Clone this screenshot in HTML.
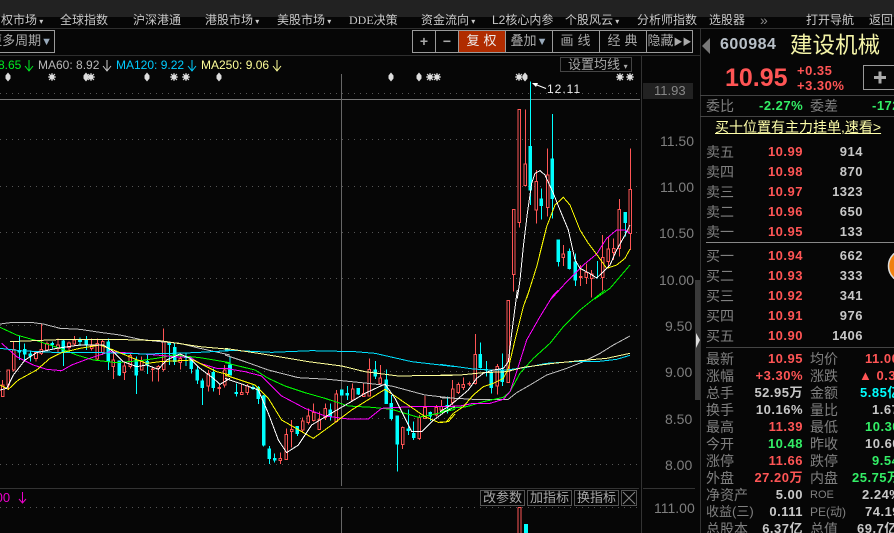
<!DOCTYPE html>
<html><head><meta charset="utf-8">
<style>
html,body{margin:0;padding:0;background:#060606}
#p{position:relative;width:894px;height:533px;overflow:hidden;background:#060606;font-family:"Liberation Sans","WenQuanYi Zen Hei","Noto Sans CJK SC",sans-serif;font-size:12px;color:#bbb}
.t,.a{position:absolute;white-space:nowrap;line-height:16px;height:16px}
.n{font-size:12px;top:12px;color:#c8c8c8}
.b{position:absolute;box-sizing:border-box;border:1px solid #9a9a9a;text-align:center;color:#aaa;font-size:14px;line-height:20px;height:23px;top:30px;white-space:nowrap}
.l{font-size:14px;color:#808080;left:706px}
.m{font-size:14px;color:#808080;left:810px}
.r{font-weight:bold;font-size:13px;letter-spacing:.5px;color:#ff5555;text-align:right;width:80px;left:723px}
.v{font-weight:bold;font-size:13px;letter-spacing:.5px;color:#c8c8c8;text-align:right;width:60px;left:803px}
.w{font-weight:bold;font-size:13px;letter-spacing:.5px;color:#c8c8c8}
.g{color:#33ee66}
.e{color:#ff5555}
.y{font-size:14px;color:#7f7f7f}
.h{position:absolute;background:#2e2e2e;height:1px}
.vl{position:absolute;width:1px;background:#2e2e2e}
.tb{position:absolute;box-sizing:border-box;border:1px solid #555;color:#aaa;font-size:13px;text-align:center;top:490px;height:16px;line-height:14px}
svg{position:absolute;left:0;top:0}
</style></head><body><div id="p">
<div style="position:absolute;left:0;top:0;width:894px;height:17px;background:#222"></div>
<span class="t n" style="left:1px">权市场<span style="font-size:8px"> ▾</span></span>
<span class="t n" style="left:60px">全球指数</span>
<span class="t n" style="left:133px">沪深港通</span>
<span class="t n" style="left:205px">港股市场<span style="font-size:8px"> ▾</span></span>
<span class="t n" style="left:277px">美股市场<span style="font-size:8px"> ▾</span></span>
<span class="t n" style="left:349px;font-family:'Liberation Serif','WenQuanYi Zen Hei',serif">DDE决策</span>
<span class="t n" style="left:421px">资金流向<span style="font-size:8px"> ▾</span></span>
<span class="t n" style="left:492px">L2核心内参</span>
<span class="t n" style="left:565px">个股风云<span style="font-size:8px"> ▾</span></span>
<span class="t n" style="left:637px">分析师指数</span>
<span class="t n" style="left:709px">选股器</span>
<span class="t n" style="left:760px;color:#888;font-size:14px">»</span>
<span class="t n" style="left:806px">打开导航</span>
<span class="t n" style="left:869px">返回</span>
<div class="h" style="left:0;top:28px;width:894px"></div>
<div class="h" style="left:0;top:55px;width:700px"></div>
<div class="b" style="left:-12px;width:67px;font-size:13px;text-align:right;padding-right:2px">更多周期<span style="color:#9ab;font-size:11px">▼</span></div>
<div class="b" style="left:412px;width:24px;font-weight:bold">+</div>
<div class="b" style="left:435px;width:24px;font-weight:bold">−</div>
<div class="b" style="left:458px;width:48px;background:#b02c00;color:#eee;letter-spacing:4px;font-size:13px;padding-left:3px">复权</div>
<div class="b" style="left:505px;width:48px;font-size:13px">叠加<span style="color:#9ab;font-size:11px">▼</span></div>
<div class="b" style="left:552px;width:48px;letter-spacing:4px;font-size:13px;padding-left:3px">画线</div>
<div class="b" style="left:599px;width:48px;letter-spacing:4px;font-size:13px;padding-left:3px">经典</div>
<div class="b" style="left:646px;width:47px;font-size:13px">隐藏<span style="font-size:9px">▶▶</span></div>
<span class="t" style="left:-2px;top:57px;color:#00ee22">8.65</span>
<span class="t" style="left:38px;top:57px;color:#b8b8b8">MA60: 8.92</span>
<span class="t" style="left:116px;top:57px;color:#00ccff">MA120: 9.22</span>
<span class="t" style="left:201px;top:57px;color:#ffff99">MA250: 9.06</span>
<div style="position:absolute;box-sizing:border-box;left:560px;top:57px;width:72px;height:15px;border:1px solid #444;color:#aaa;font-size:13px;line-height:13px;padding-left:7px;white-space:nowrap">设置均线 <span style="font-size:8px">▾</span></div>
<svg width="894" height="533" viewBox="0 0 894 533">
<defs>
<g id="s"><circle r="2.6" fill="#ddd"/><path d="M-4 0H4M0-4V4M-3-3L3 3M-3 3L3-3" stroke="#ddd" stroke-width="1"/></g>
<g id="d"><path d="M0-4.500L2.500-1.500V1.500L0 4.500L-2.500 1.500V-1.500Z" fill="#ddd"/></g>
</defs>
<path d="M29 60V71M25 66L29 71L33 66" stroke="#00ee22" fill="none"/>
<path d="M107 60V71M103 66L107 71L111 66" stroke="#ccc" fill="none"/>
<path d="M192 60V71M188 66L192 71L196 66" stroke="#00ccff" fill="none"/>
<path d="M277 60V71M273 66L277 71L281 66" stroke="#ffff99" fill="none"/>
<use href="#d" x="8" y="77"/><use href="#s" x="52" y="77"/><use href="#d" x="86" y="77"/><use href="#s" x="91" y="77"/><use href="#d" x="147" y="77"/><use href="#s" x="174" y="77"/><use href="#s" x="186" y="77"/><use href="#d" x="219" y="77"/><use href="#d" x="391" y="77"/><use href="#d" x="419" y="77"/><use href="#s" x="430" y="77"/><use href="#s" x="437" y="77"/><use href="#s" x="519" y="77"/><use href="#d" x="525" y="77"/><use href="#s" x="620" y="77"/><use href="#s" x="630" y="77"/>
<path d="M0 93.500H640M0 139.500H640M0 186.500H640M0 232.500H640M0 278.500H640M0 325.500H640M0 371.500H640M0 418.500H640M0 464.500H640M0 507.500H640" stroke="#555" stroke-dasharray="1 5" fill="none"/>
<path d="M0 99.500H640" stroke="#777"/>
<path d="M341.500 74V486M341.500 507V533" stroke="#666"/>
<path d="M641.500 56V533M0 488.500H639M643 488.500H695" stroke="#333"/>
<path d="M700.500 28V533" stroke="#333"/>
<rect x="695" y="280" width="5" height="120" fill="#3a3a3a"/>
<path d="M696 333L700 340L696 348Z" fill="#ddd"/>
<rect x="643" y="83" width="50" height="16" fill="#222"/>
<g shape-rendering="crispEdges" stroke-width="1">
<g fill="#060606" stroke="#ff5555">
<path d="M518 507.500h3V533M518 507.500V533"/>
</g>
<rect x="524" y="524" width="4" height="9" fill="#00ffff" stroke="none"/>
</g>
<g transform="translate(0,310) scale(.33333)" shape-rendering="crispEdges">
<g fill="#060606" stroke="#ff5555" stroke-width="3">
<path d="M8 210V225M8 260V260M4 225h8V260h-8z"/>
<path d="M25 180V180M25 225V240M21 180h8V225h-8z"/>
<path d="M41 95V118M41 180V185M37 118h8V180h-8z"/>
<path d="M108 125V127M108 145V155M104 127h8V145h-8z"/>
<path d="M124 42V118M124 130V135M120 118h8V130h-8z"/>
<path d="M141 95V100M141 120V125M137 100h8V120h-8z"/>
<path d="M174 85V105M174 115V130M170 105h8V115h-8z"/>
<path d="M207 95V99M207 112V120M203 99h8V112h-8z"/>
<path d="M223 78V90M223 102V108M219 90h8V102h-8z"/>
<path d="M275 85V108M275 116V122M271 108h8V116h-8z"/>
<path d="M292 85V100M292 147V150M288 100h8V147h-8z"/>
<path d="M308 90V95M308 128V135M304 95h8V128h-8z"/>
<path d="M340 125V150M340 170V207M336 150h8V170h-8z"/>
<path d="M373 155V168M373 188V210M369 168h8V188h-8z"/>
<path d="M391 130V137M391 170V175M387 137h8V170h-8z"/>
<path d="M425 140V155M425 180V180M421 155h8V180h-8z"/>
<path d="M458 170V177M458 179V215M454 177h8V179h-8z"/>
<path d="M475 165V170M475 175V215M471 170h8V175h-8z"/>
<path d="M491 55V95M491 178V185M487 95h8V178h-8z"/>
<path d="M541 130V145M541 158V178M537 145h8V158h-8z"/>
<path d="M625 180V190M625 228V245M621 190h8V228h-8z"/>
<path d="M658 225V232M658 236V255M654 232h8V236h-8z"/>
<path d="M674 165V180M674 225V232M670 180h8V225h-8z"/>
</g>
<g fill="#00ffff" stroke="#00ffff" stroke-width="3">
<path d="M58 78V150M54 123h8v3h-8z"/>
<path d="M74 100V150M70 118h8V132h-8z"/>
<path d="M91 122V155M87 132h8V138h-8z"/>
<path d="M157 95V115M153 100h8V104h-8z"/>
<path d="M190 90V168M186 93h8V125h-8z"/>
<path d="M240 82V108M236 88h8V95h-8z"/>
<path d="M259 78V120M255 90h8V105h-8z"/>
<path d="M325 85V180M321 96h8V155h-8z"/>
<path d="M358 153V198M354 153h8V195h-8z"/>
<path d="M409 140V252M405 150h8V195h-8z"/>
<path d="M442 130V192M438 155h8V162h-8z"/>
<path d="M508 95V165M504 100h8V103h-8z"/>
<path d="M524 100V165M520 112h8V155h-8z"/>
<path d="M558 130V168M554 140h8V143h-8z"/>
<path d="M574 140V190M570 148h8V175h-8z"/>
<path d="M592 170V222M588 180h8V210h-8z"/>
<path d="M607 205V285M603 213h8V233h-8z"/>
<path d="M640 175V245M636 188h8V233h-8z"/>
</g>
</g>
<g transform="translate(225,310) scale(.33333)" shape-rendering="crispEdges">
<g fill="#060606" stroke="#ff5555" stroke-width="3">
<path d="M50 220V248M50 253V255M46 248h8V253h-8z"/>
<path d="M67 222V228M67 248V255M63 228h8V248h-8z"/>
<path d="M166 427V445M166 452V462M162 445h8V452h-8z"/>
<path d="M184 355V373M180 373h8V449h-8z"/>
<path d="M200 330V358M200 365V412M196 358h8V365h-8z"/>
<path d="M233 322V333M233 360V365M229 333h8V360h-8z"/>
<path d="M250 295V318M250 338V343M246 318h8V338h-8z"/>
<path d="M266 280V307M266 332V335M262 307h8V332h-8z"/>
<path d="M283 305V328M283 358V360M279 328h8V358h-8z"/>
<path d="M301 280V295M301 322V330M297 295h8V322h-8z"/>
<path d="M334 240V252M334 335V338M330 252h8V335h-8z"/>
<path d="M383 220V237M383 270V272M379 237h8V270h-8z"/>
<path d="M416 220V250M412 250h8V260h-8z"/>
<path d="M433 145V178M429 178h8V258h-8z"/>
<path d="M466 165V204M466 220V222M462 204h8V220h-8z"/>
<path d="M533 350V352M533 403V417M529 352h8V403h-8z"/>
<path d="M583 315V322M583 385V390M579 322h8V385h-8z"/>
<path d="M600 258V292M596 292h8V325h-8z"/>
<path d="M634 285V293M634 315V320M630 293h8V315h-8z"/>
<path d="M649 270V290M649 300V305M645 290h8V300h-8z"/>
<path d="M683 210V237M683 278V285M679 237h8V278h-8z"/>
</g>
<g fill="#00ffff" stroke="#00ffff" stroke-width="3">
<path d="M15 140V195M11 165h8V195h-8z"/>
<path d="M34 220V260M30 247h8v3h-8z"/>
<path d="M84 225V240M80 232h8v3h-8z"/>
<path d="M100 228V282M96 232h8V265h-8z"/>
<path d="M116 255V410M112 258h8V405h-8z"/>
<path d="M133 408V462M129 417h8V445h-8z"/>
<path d="M149 430V458M145 445h8v5h-8z"/>
<path d="M217 350V378M213 350h8V370h-8z"/>
<path d="M316 280V332M312 300h8V318h-8z"/>
<path d="M350 240V255M346 240h8V255h-8z"/>
<path d="M367 228V270M363 250h8v5h-8z"/>
<path d="M400 235V255M396 235h8V252h-8z"/>
<path d="M451 153V207M447 180h8V198h-8z"/>
<path d="M484 178V282M480 210h8V280h-8z"/>
<path d="M499 255V332M495 280h8V325h-8z"/>
<path d="M517 318V485M513 318h8V402h-8z"/>
<path d="M550 298V375M546 357h8v5h-8z"/>
<path d="M566 335V390M562 370h8V382h-8z"/>
<path d="M616 305V333M612 307h8V318h-8z"/>
<path d="M667 260V310M663 287h8v3h-8z"/>
</g>
</g>
<g transform="translate(440,290) scale(.33333)" shape-rendering="crispEdges">
<g fill="#060606" stroke="#ff5555" stroke-width="3">
<path d="M55 278V283M55 307V312M51 283h8V307h-8z"/>
<path d="M70 262V283M70 292V300M66 283h8V292h-8z"/>
<path d="M88 275V288M84 280h8v2h-8z"/>
<path d="M106 132V193M106 280V283M102 193h8V280h-8z"/>
<path d="M172 222V230M172 288V313M168 230h8V288h-8z"/>
<path d="M205 30V31M201 31h8V278h-8z"/>
</g>
<g fill="#00ffff" stroke="#00ffff" stroke-width="3">
<path d="M121 157V235M117 193h8V232h-8z"/>
<path d="M139 213V260M135 238h8v2h-8z"/>
<path d="M154 240V310M150 250h8V293h-8z"/>
<path d="M187 190V288M183 240h8V275h-8z"/>
</g>
</g>
<g transform="translate(440,80) scale(.33333)" shape-rendering="crispEdges">
<g fill="#060606" stroke="#ff5555" stroke-width="3">
<path d="M221 584V635M217 388h8V584h-8z"/>
<path d="M238 428V443M234 88h8V428h-8z"/>
<path d="M256 88V252M256 316V320M252 252h8V316h-8z"/>
<path d="M289 270V305M289 390V430M285 305h8V390h-8z"/>
<path d="M323 205V285M323 382V410M319 285h8V382h-8z"/>
<path d="M370 495V522M370 533V558M366 522h8V533h-8z"/>
<path d="M422 555V590M422 593V618M418 590h8V593h-8z"/>
<path d="M439 550V578M439 593V612M435 578h8V593h-8z"/>
<path d="M455 570V582M455 595V652M451 582h8V595h-8z"/>
<path d="M488 465V532M488 592V632M484 532h8V592h-8z"/>
<path d="M505 470V507M505 545V565M501 507h8V545h-8z"/>
<path d="M521 475V505M521 518V540M517 505h8V518h-8z"/>
<path d="M538 357V388M538 505V530M534 388h8V505h-8z"/>
<path d="M571 205V328M571 460V510M567 328h8V460h-8z"/>
</g>
<g fill="#00ffff" stroke="#00ffff" stroke-width="3">
<path d="M271 5V375M267 200h8V330h-8z"/>
<path d="M304 325V418M300 357h8V377h-8z"/>
<path d="M337 102V415M333 237h8V355h-8z"/>
<path d="M355 480V560M351 480h8V545h-8z"/>
<path d="M388 505V568M384 515h8V565h-8z"/>
<path d="M406 520V618M402 546h8V600h-8z"/>
<path d="M472 543V596"/>
<path d="M556 397V470M552 397h8V427h-8z"/>
</g>
</g>
<g fill="none" stroke-width="1" shape-rendering="crispEdges">
<g transform="translate(0,310) scale(.33333)">
<polyline vector-effect="non-scaling-stroke" stroke="#c0c0c0" points="0,42 30,38 100,38 130,42 180,55 240,58 300,67 360,75 420,88 480,95 540,100 600,115 690,135"/>
<polyline vector-effect="non-scaling-stroke" stroke="#00ff00" points="0,52 50,75 110,92 180,115 230,135 280,150 350,158 420,152 470,145 520,135 600,143 690,158"/>
<polyline vector-effect="non-scaling-stroke" stroke="#ff00ff" points="5,100 50,140 100,165 140,178 185,182 215,165 260,148 330,125 400,130 470,135 520,140 570,142 600,160 650,175 690,175"/>
<polyline vector-effect="non-scaling-stroke" stroke="#00e0ff" points="0,115 60,122 180,128 300,128 440,132 580,128 690,122"/>
<polyline vector-effect="non-scaling-stroke" stroke="#ffff99" points="30,95 100,92 200,88 340,88 480,92 600,110 690,118"/>
<polyline vector-effect="non-scaling-stroke" stroke="#ffff00" points="0,225 25,238 55,210 110,180 150,145 185,128 240,115 300,105 340,120 400,145 440,160 480,155 540,152 580,150 610,165 650,185 690,195"/>
<polyline vector-effect="non-scaling-stroke" stroke="#ffffff" points="0,240 20,235 40,195 75,150 110,128 170,115 240,105 310,105 340,125 370,155 410,170 440,165 475,178 500,150 540,132 570,145 600,175 640,205 660,223 690,205"/>
</g>
<g transform="translate(225,310) scale(.33333)">
<polyline vector-effect="non-scaling-stroke" stroke="#c0c0c0" points="0,135 60,155 130,180 220,203 310,208 410,218 500,228 600,255 690,265"/>
<polyline vector-effect="non-scaling-stroke" stroke="#00ff00" points="0,158 90,180 130,205 180,228 240,248 300,265 370,288 440,292 500,298 580,322 640,310 690,298"/>
<polyline vector-effect="non-scaling-stroke" stroke="#ff00ff" points="0,175 60,185 110,198 170,258 240,295 300,318 370,327 430,327 470,295 560,290 690,290"/>
<polyline vector-effect="non-scaling-stroke" stroke="#00e0ff" points="0,120 140,127 260,122 390,125 450,130 560,155 690,170"/>
<polyline vector-effect="non-scaling-stroke" stroke="#ffff99" points="0,115 100,130 250,155 350,168 420,185 520,198 690,195"/>
<polyline vector-effect="non-scaling-stroke" stroke="#ffff00" points="0,195 90,225 130,265 170,330 265,385 320,345 380,300 480,238 520,265 600,320 640,337 670,335 690,312"/>
<polyline vector-effect="non-scaling-stroke" stroke="#ffffff" points="0,205 50,222 100,240 130,310 160,390 185,428 220,405 260,345 310,315 370,280 420,250 480,222 510,265 560,365 590,365 620,335 660,305 690,290"/>
</g>
<g transform="translate(440,290) scale(.33333)">
<polyline vector-effect="non-scaling-stroke" stroke="#c0c0c0" points="0,323 50,325 100,328 150,328 205,328 230,308 270,285 320,255 380,235 430,215 480,190 520,165 570,138"/>
<polyline vector-effect="non-scaling-stroke" stroke="#00ff00" points="0,368 30,355 80,350 130,335 190,322 210,305 240,250 280,205 330,160 370,110 420,60 495,0"/>
<polyline vector-effect="non-scaling-stroke" stroke="#ff00ff" points="0,350 60,348 100,340 150,340 190,328 210,305 230,245 260,150 300,80 340,15 355,0"/>
<polyline vector-effect="non-scaling-stroke" stroke="#00e0ff" points="0,223 50,230 100,237 150,240 200,240 260,232 320,220 400,215 470,215 530,208 570,196"/>
<polyline vector-effect="non-scaling-stroke" stroke="#ffff99" points="0,257 60,255 130,248 200,245 250,232 340,220 420,212 500,205 570,190"/>
<polyline vector-effect="non-scaling-stroke" stroke="#ffff00" points="0,398 20,395 40,370 70,350 100,315 130,290 160,280 190,265 205,235 225,150 250,50 268,0"/>
<polyline vector-effect="non-scaling-stroke" stroke="#ffffff" points="0,365 25,350 50,330 85,300 110,265 130,250 160,240 190,235 205,215 215,130 232,0"/>
</g>
<g transform="translate(440,80) scale(.33333)">
<polyline vector-effect="non-scaling-stroke" stroke="#00ff00" points="463,658 510,625 570,555"/>
<polyline vector-effect="non-scaling-stroke" stroke="#ff00ff" points="333,658 380,605 430,555 470,522 500,475 530,450 555,450 570,460"/>
<polyline vector-effect="non-scaling-stroke" stroke="#ffff00" points="260,655 290,560 320,440 345,375 370,352 390,375 420,450 445,490 475,530 500,565 530,555 555,535 570,507"/>
<polyline vector-effect="non-scaling-stroke" stroke="#ffffff" points="232,655 240,600 250,500 262,400 275,310 285,280 300,272 315,285 340,340 360,390 385,450 405,540 420,565 445,578 470,594 490,575 510,555 530,510 555,465 570,435"/>
</g>
</g>
<path d="M533 83.500L546 88.500" stroke="#fff"/><path d="M532 83L538 83L536 87Z" fill="#fff"/>
<path d="M702 46L710 38V54Z" fill="#777"/>
<rect x="863.500" y="65.500" width="40" height="24" fill="none" stroke="#999"/>
<path d="M874 77.500H886M880 71.500V83.500" stroke="#aaa" stroke-width="3"/>
<path d="M700 95.500H894M700 116.500H894M706 347.500H894" stroke="#444"/>
<path d="M706 242.500H894" stroke="#888"/>
<circle cx="905" cy="266" r="16.500" fill="#f08010" stroke="#ddd" stroke-width="1.500"/>
<path d="M623 492L635 504M635 492L623 504" stroke="#888"/>
<path d="M22.500 492V503M19 499L22.500 503L26 499" stroke="#ee00cc" fill="none"/>
</svg>
<span class="t" style="left:547px;top:81px;color:#eee;font-size:12px;letter-spacing:1px">12.11</span>
<span class="t" style="left:654px;top:83px;color:#888;font-size:13px">11.93</span>
<span class="a" style="left:660px;top:133px;color:#7f7f7f;font-size:14px">11.50</span>
<span class="a" style="left:660px;top:179px;color:#7f7f7f;font-size:14px">11.00</span>
<span class="a" style="left:659px;top:225px;color:#7f7f7f;font-size:14px">10.50</span>
<span class="a" style="left:659px;top:272px;color:#7f7f7f;font-size:14px">10.00</span>
<span class="a" style="left:665px;top:318px;color:#7f7f7f;font-size:14px">9.50</span>
<span class="a" style="left:665px;top:364px;color:#7f7f7f;font-size:14px">9.00</span>
<span class="a" style="left:665px;top:411px;color:#7f7f7f;font-size:14px">8.50</span>
<span class="a" style="left:665px;top:457px;color:#7f7f7f;font-size:14px">8.00</span>
<span class="a" style="left:654px;top:500px;color:#7f7f7f;font-size:14px">111.00</span>
<span class="t" style="left:-8px;top:490px;color:#ee00cc;font-size:13px">.00</span>
<div class="tb" style="left:480px;width:45px">改参数</div>
<div class="tb" style="left:527px;width:45px">加指标</div>
<div class="tb" style="left:574px;width:45px">换指标</div>
<div class="tb" style="left:621px;width:16px"></div>
<span class="t" style="left:720px;top:37px;font-weight:bold;font-size:16px;color:#b8c0c8;letter-spacing:.5px">600984</span>
<span class="t" style="left:790px;top:36px;font-size:22.500px;color:#f4f4a8;line-height:20px;height:20px">建设机械</span>
<span class="t" style="left:725px;top:63px;font-weight:bold;font-size:25px;color:#ff5555;line-height:30px;height:30px">10.95</span>
<span class="t" style="left:797px;top:63px;font-weight:bold;font-size:13px;color:#ff5555;letter-spacing:.5px">+0.35</span>
<span class="t" style="left:797px;top:78px;font-weight:bold;font-size:13px;color:#ff5555;letter-spacing:.5px">+3.30%</span>
<span class="t l" style="top:98px">委比</span><span class="t w g" style="left:759px;top:98px">-2.27%</span><span class="t m" style="top:98px">委差</span><span class="t w g" style="left:872px;top:98px">-172</span>
<span class="t" style="left:715px;top:119px;font-size:14px;color:#ffffaa;text-decoration:underline">买十位置有主力挂单,速看&gt;</span>
<span class="t l" style="top:144px">卖五</span><span class="t r" style="top:144px">10.99</span><span class="t v" style="top:144px">914</span>
<span class="t l" style="top:164px">卖四</span><span class="t r" style="top:164px">10.98</span><span class="t v" style="top:164px">870</span>
<span class="t l" style="top:184px">卖三</span><span class="t r" style="top:184px">10.97</span><span class="t v" style="top:184px">1323</span>
<span class="t l" style="top:204px">卖二</span><span class="t r" style="top:204px">10.96</span><span class="t v" style="top:204px">650</span>
<span class="t l" style="top:224px">卖一</span><span class="t r" style="top:224px">10.95</span><span class="t v" style="top:224px">133</span>
<span class="t l" style="top:248px">买一</span><span class="t r" style="top:248px">10.94</span><span class="t v" style="top:248px">662</span>
<span class="t l" style="top:268px">买二</span><span class="t r" style="top:268px">10.93</span><span class="t v" style="top:268px">333</span>
<span class="t l" style="top:288px">买三</span><span class="t r" style="top:288px">10.92</span><span class="t v" style="top:288px">341</span>
<span class="t l" style="top:308px">买四</span><span class="t r" style="top:308px">10.91</span><span class="t v" style="top:308px">976</span>
<span class="t l" style="top:328px">买五</span><span class="t r" style="top:328px">10.90</span><span class="t v" style="top:328px">1406</span>
<span class="t l" style="top:351px">最新</span><span class="t r" style="top:351px">10.95</span><span class="t m" style="top:351px">均价</span><span class="t w e" style="left:865px;top:351px">11.00</span>
<span class="t l" style="top:368px">涨幅</span><span class="t r" style="top:368px">+3.30%</span><span class="t m" style="top:368px">涨跌</span><span class="t w e" style="left:859px;top:368px">▲ 0.35</span>
<span class="t l" style="top:385px">总手</span><span class="t r" style="top:385px;color:#c8c8c8">52.95万</span><span class="t m" style="top:385px">金额</span><span class="t w" style="left:860px;top:385px;color:#00ffff">5.85亿</span>
<span class="t l" style="top:402px">换手</span><span class="t r" style="top:402px;color:#c8c8c8">10.16%</span><span class="t m" style="top:402px">量比</span><span class="t w" style="left:872px;top:402px">1.67</span>
<span class="t l" style="top:419px">最高</span><span class="t r" style="top:419px">11.39</span><span class="t m" style="top:419px">最低</span><span class="t w g" style="left:865px;top:419px">10.30</span>
<span class="t l" style="top:436px">今开</span><span class="t r g" style="top:436px">10.48</span><span class="t m" style="top:436px">昨收</span><span class="t w" style="left:865px;top:436px">10.60</span>
<span class="t l" style="top:453px">涨停</span><span class="t r" style="top:453px">11.66</span><span class="t m" style="top:453px">跌停</span><span class="t w g" style="left:872px;top:453px">9.54</span>
<span class="t l" style="top:470px">外盘</span><span class="t r" style="top:470px">27.20万</span><span class="t m" style="top:470px">内盘</span><span class="t w g" style="left:852px;top:470px">25.75万</span>
<span class="t l" style="top:487px">净资产</span><span class="t r" style="top:487px;color:#c8c8c8">5.00</span><span class="t m" style="top:487px;font-size:11px">ROE</span><span class="t w" style="left:862px;top:487px">2.24%</span>
<span class="t l" style="top:504px;font-size:13px">收益(三)</span><span class="t r" style="top:504px;color:#c8c8c8">0.111</span><span class="t m" style="top:504px;font-size:12px">PE(动)</span><span class="t w" style="left:865px;top:504px">74.19</span>
<span class="t l" style="top:521px">总股本</span><span class="t r" style="top:521px;color:#c8c8c8">6.37亿</span><span class="t m" style="top:521px">总值</span><span class="t w" style="left:857px;top:521px">69.7亿</span>
</div></body></html>
